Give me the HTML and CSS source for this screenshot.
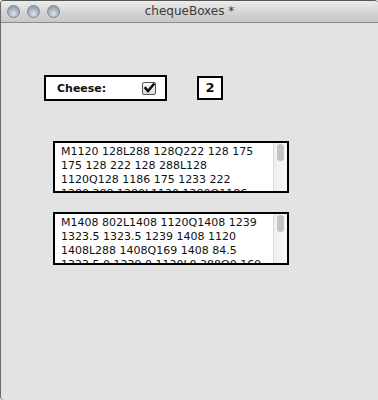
FILE: index.html
```html
<!DOCTYPE html>
<html>
<head>
<meta charset="utf-8">
<link rel="stylesheet" href="styles.css">
</head>
<body>
<div class="window">
  <div class="titlebar">
    <div class="lights">
      <span class="light"></span><span class="light"></span><span class="light"></span>
    </div>
    <div class="title">chequeBoxes *</div>
  </div>
  <div class="content">
    <div class="row">
      <div class="cheese">
        <span class="label">Cheese:</span>
        <span class="checkbox">
          <svg width="14" height="13" viewBox="0 0 14 13">
            <path d="M3.5 6.2 L6 9 L11.5 2.5" fill="none" stroke="#111" stroke-width="2.6" stroke-linecap="square"/>
          </svg>
        </span>
      </div>
      <div class="count">2</div>
    </div>
    <div class="textarea first">
      <div class="text">
        <div class="line">M1120 128L288 128Q222 128 175</div>
        <div class="line">175 128 222 128 288L128</div>
        <div class="line">1120Q128 1186 175 1233 222</div>
        <div class="line">1280 288 1280L1120 1280Q1186</div>
      </div>
      <div class="scroll"><span class="thumb"></span></div>
    </div>
    <div class="textarea second">
      <div class="text">
        <div class="line">M1408 802L1408 1120Q1408 1239</div>
        <div class="line">1323.5 1323.5 1239 1408 1120</div>
        <div class="line">1408L288 1408Q169 1408 84.5</div>
        <div class="line">1323.5 0 1239 0 1120L0 288Q0 169</div>
      </div>
      <div class="scroll"><span class="thumb"></span></div>
    </div>
  </div>
</div>
</body>
</html>
```

FILE: styles.css
```css
html, body {
  margin: 0;
  padding: 0;
  background: #e3e3e3;
}
body {
  width: 378px;
  height: 400px;
  overflow: hidden;
  font-family: "DejaVu Sans", sans-serif;
}
.window {
  width: 378px;
  height: 400px;
  box-sizing: border-box;
  border-left: 1px solid #6a6a6a;
  border-top: 1px solid #555;
  border-radius: 4px 4px 4px 4px;
  background: #e3e3e3;
  overflow: hidden;
  display: flex;
  flex-direction: column;
}
.titlebar {
  height: 21px;
  flex: none;
  position: relative;
  background: linear-gradient(#ebebeb, #d2d2d2 60%, #c8c8c8);
  border-bottom: 1px solid #8a8a8a;
  display: flex;
  align-items: center;
}
.lights {
  display: flex;
  gap: 7px;
  padding-left: 6px;
}
.light {
  width: 13px;
  height: 13px;
  border-radius: 50%;
  box-sizing: border-box;
  border: 1px solid #7f8891;
  background: radial-gradient(circle at 50% 70%, #dde4ea, #a4aeb8 55%, #8e97a1);
}
.title {
  position: absolute;
  left: 0;
  right: 0;
  top: 3px;
  text-align: center;
  font-size: 12px;
  color: #3a3a3a;
}
.content {
  display: flex;
  flex-direction: column;
  padding: 52px 0 0 43px;
}
.row {
  display: flex;
  align-items: flex-start;
  gap: 30px;
}
.cheese {
  width: 123px;
  height: 26px;
  box-sizing: border-box;
  border: 2px solid #000;
  background: #fff;
  display: flex;
  align-items: center;
  padding-left: 11px;
  padding-right: 9px;
}
.label {
  font-weight: bold;
  font-size: 11px;
  color: #111;
  flex: 1;
}
.checkbox {
  width: 14px;
  height: 13px;
  box-sizing: border-box;
  border: 1px solid #555;
  border-radius: 2px;
  background: linear-gradient(#fafafa, #dcdcdc);
  position: relative;
  display: block;
}
.checkbox svg {
  position: absolute;
  left: -1px;
  top: -1px;
}
.count {
  width: 26px;
  height: 24px;
  margin-top: 1px;
  box-sizing: border-box;
  border: 2px solid #000;
  background: #fff;
  font-weight: bold;
  font-size: 13px;
  text-align: center;
  line-height: 19px;
  color: #111;
}
.textarea {
  width: 236px;
  height: 52px;
  box-sizing: border-box;
  border: 2px solid #000;
  background: #fff;
  display: flex;
  margin-left: 9px;
  overflow: hidden;
}
.first { margin-top: 40px; }
.second { margin-top: 19px; height: 53px; }
.text {
  flex: 1;
  padding: 2px 0 0 6px;
  font-size: 11px;
  line-height: 14px;
  color: #111;
  overflow: hidden;
}
.line { white-space: nowrap; }
.scroll {
  width: 14px;
  flex: none;
  border-left: 1px solid #dadada;
  background: linear-gradient(90deg, #eeeeee, #f9f9f9);
  padding: 1px 0 0 3px;
  box-sizing: border-box;
}
.thumb {
  display: block;
  width: 7px;
  height: 17px;
  border-radius: 4px;
  background: #c4c4c4;
}
```
